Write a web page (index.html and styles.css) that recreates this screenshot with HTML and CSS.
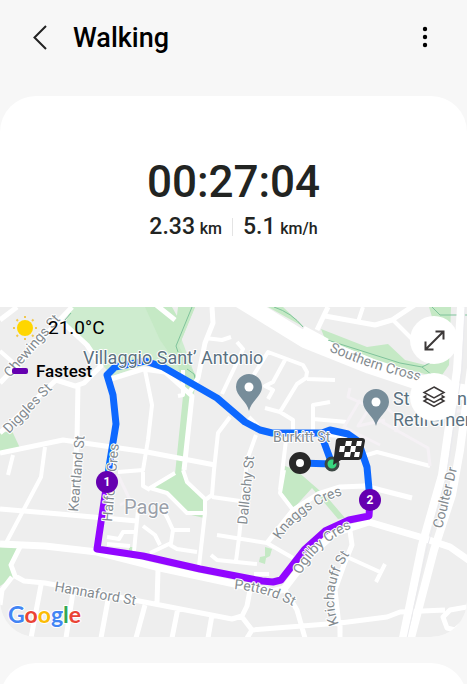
FILE: index.html
```html
<!DOCTYPE html>
<html lang="en">
<head>
  <meta charset="UTF-8" />
  <meta name="viewport" content="width=device-width, initial-scale=1.0"/>
  <title>Walking</title>
  <link rel="stylesheet" href="styles.css">
</head>
<body>
  <header class="topbar">
    <button class="icon-btn" aria-label="Back">
      <svg width="24" height="30" viewBox="0 0 24 30"><path d="M18 3L6.500 14.500L18 26"/></svg>
    </button>
    <h1>Walking</h1>
    <button class="icon-btn more" aria-label="More options">
      <svg width="24" height="30" viewBox="0 0 24 30"><circle cx="12" cy="6" r="2.200"/><circle cx="12" cy="14" r="2.200"/><circle cx="12" cy="22" r="2.200"/></svg>
    </button>
  </header>

  <main class="card">
    <section class="summary">
      <div class="time">00:27:04</div>
      <div class="stats">
        <span class="stat">2.33 <small>km</small></span>
        <span class="stat">5.1 <small>km/h</small></span>
      </div>
    </section>

    <section class="map">
      <svg class="map-canvas" viewBox="0 307 467 330">
        <defs>
          <path id="southern" d="M329 351Q370 370 425 382"/>
          <path id="petterd" d="M234 589Q270 592 300 610"/>
          <path id="ogilby" d="M301 575Q315 545 354 527"/>
          <path id="krichauff" d="M339 624Q324 588 354 548"/>
          <path id="knaggs" d="M280 540Q300 508 345 494"/>
        </defs>

        <!-- parks -->
        <g class="park">
          <path class="park-light" d="M71 307H158L180 335L196 378L163 365L150 363L113 376L103 366L86 344L66 322Z"/>
          <path d="M145 307H172L182 325L190 307H195L179 346L194 376L185 375L160 340Z"/>
          <path d="M178 307H195L178 348L197 377L193 398L183 470L187 483L205 500L204 518L187 514L167 494L151 488L175 474L183 396L174 340Z"/>
          <path d="M285 466L296 470L327 497L345 518L338 519L312 488L293 509L281 494Z"/>
          <path d="M0 433L12 431L20 448L0 452Z"/>
          <path d="M0 547L18 548L11 565L14 577L0 586Z"/>
          <path d="M321 329L367 347L388 344L405 360L425 365L445 360L429 307H451L449 365L440 378L380 362L325 339Z"/>
          <path d="M268 307H283L304 327Z"/>
          <path d="M265 547L272 549L270 556L266 558L265 564L259 562L260 557L265 556Z"/>
          <path d="M129 547h4v5h-4z"/>
        </g>
        <path class="trail" d="M192 307L176 346L178 352M187 369L194 374L196 382M274 307Q292 313 303 327M321 338L400 363L422 367L430 363M432 307L440 315H467M422 367L432 375M65 320L71 313"/>

        <!-- streets -->
        <path class="street thin" d="M0 351L25 373M13 455L8 475M45 447L41 477L6 543M145 370L152 405L148 440L143 470L118 472M143 472L143 486L150 490M205 338L222 340L231 337M237 342L243 349L240 356L222 394M243 392L268 352L303 365L307 372L306 378L297 384L280 412L265 408M285 360L273 382L265 386L273 390L268 399M280 412L293 420V434M230 417L218 433L214 470L212 495L205 500V513L199 566M183 370V395L178 396M256 435L247 460L239 538L236 561M249 417L258 426M286 440L280 490M212 497L240 501M183 470L187 482L205 499M205 513H187L167 493L150 488L175 473M217 535L267 543L293 558M211 555L217 560L257 564M254 574H269M284 470L280 493L293 510M163 510L167 517L173 530L171 543L150 553M173 530H190M170 545L177 549L197 552M143 526L155 535L160 545M107 537L119 539L123 532H134M107 544L130 546M138 510L134 551M307 379L335 380M313 430V405L330 402M313 419L347 422M363 307L358 322M393 320L413 340M307 433L340 436L360 446M360 457L377 452L430 466M347 557L380 572M385 564L376 582"/>
        <path class="street lane" d="M350 388L348 397L370 407L382 404M360 400L344 427L380 445M370 407L358 426L385 420M382 422L428 448L430 466M387 408L400 420L395 432M118 475L130 500L120 505M467 411H455"/>
        <path class="street" d="M0 320L17 307M72 307L0 383M60 320L87 345L101 366L84 383L75 386L56 380L0 433M78 384L77 440L72 512M0 453L63 440L147 452L215 465M111 379L143 369L165 372L192 396L184 470M212 307L213 323L205 343L198 378L190 392M0 509L60 514L137 521M12 577L2 590L0 605M41 585L31 638M73 592L66 638M108 600L101 638M145 605L136 638M158 570L157 603M178 608L172 638M212 615L208 638M20 547L11 565L15 576L24 581L45 583L160 605L232 619L242 616L247 606L250 590M242 617L252 630L247 638M252 630L340 623L387 617L400 612L445 610M285 590L297 610L305 638M340 620V638M267 543L293 510L318 494L340 487L365 486L412 498M349 524L352 545L345 562L335 590L339 626M150 300L175 320M328 307L317 330M325 316L375 325L392 320L416 304M467 607L450 610L443 617L447 628L455 630L467 620"/>
        <path class="street wide" d="M0 544L45 546L97 552L160 568L230 583L272 592L284 589L310 555L335 533L369 522L420 537L450 547L470 561"/>
        <path class="street avenue" d="M235 297L305 340L370 366L430 386L467 393M301 333L325 346"/>
        <path class="street drive" d="M461 307L457 370L447 440L442 475L422 545L403 638M472 360L460 450L452 495L434 550L411 638"/>
        <path class="median" d="M465 307L462 370L452 440L446 480L427 548L407 638"/>

        <!-- street names -->
        <g class="label">
          <text transform="translate(10 378) rotate(-49)">Chewings St</text>
          <text transform="translate(9 434) rotate(-46)">Diggles St</text>
          <text transform="translate(78 512) rotate(-85)">Keartland St</text>
          <text transform="translate(247 525) rotate(-84)">Dallachy St</text>
          <text transform="translate(442 529) rotate(-76)">Coulter Dr</text>
          <text transform="translate(54 591) rotate(10)">Hannaford St</text>
          <text><textPath href="#southern">Southern Cross</textPath></text>
          <text><textPath href="#krichauff">Krichauff St</textPath></text>
          <text><textPath href="#knaggs">Knaggs Cres</textPath></text>
          <text class="suburb" x="124" y="514">Page</text>
        </g>

        <!-- route -->
        <path class="route" d="M107 482L109 467L116 424L113 395L107 375L115 367L145 361L163 367L217 398L245 422L260 430L272 433L322 433L330 430L348 434L358 441L367 467L370 500M321 434L332 464L300 463"/>
        <path class="route fastest" d="M107 482L97 549L143 556L200 569L262 581L273 582L281 580L305 549L325 531L349 520L369 516L370 500"/>

        <g class="label">
          <text transform="translate(112 522) rotate(-85)">Halford Cres</text>
          <text><textPath href="#ogilby">Ogilby Cres</textPath></text>
          <text><textPath href="#petterd">Petterd St</textPath></text>
          <text x="273" y="442">Burkitt St</text>
          <g class="place">
            <text x="83" y="364">Villaggio Sant’ Antonio</text>
            <text x="393" y="405">St</text>
            <text x="457" y="405">nd</text>
            <text x="393" y="426">Retirement</text>
          </g>
        </g>

        <!-- pins -->
        <g class="pin">
          <path d="M249 411C247 401 236 396 236 387a13 13 0 0 1 26 0C262 396 251 401 249 411Z"/>
          <circle cx="249" cy="387" r="4.500"/>
          <path d="M376 426C374 416 363 411 363 402a13 13 0 0 1 26 0C389 411 378 416 376 426Z"/>
          <circle cx="376" cy="402" r="4.500"/>
        </g>
        <circle class="start" cx="300" cy="463" r="7.500"/>
        <circle class="finish" cx="332" cy="464" r="6"/>
        <g class="flag">
          <path d="M339 438H362Q365 438 365 441L362 457Q361 460 358 460H341L333 465L336 440Q337 438 339 438Z"/>
          <path class="checks" d="M346 441h6l-1 5h-6zM357 441h5l-1 5h-5zM340 446h5l-1 6h-5zM351 446h5l-1 6h-5zM345 452h6l-1 5h-6zM355 452h5l-1 5h-5z"/>
        </g>
        <g class="km">
          <circle cx="107" cy="482" r="11"/>
          <text x="107" y="486">1</text>
          <circle cx="370" cy="500" r="11"/>
          <text x="370" y="504">2</text>
        </g>

        <text class="google" x="8" y="623"><tspan class="blue">G</tspan><tspan class="red">o</tspan><tspan class="yellow">o</tspan><tspan class="blue">g</tspan><tspan class="green">l</tspan><tspan class="red">e</tspan></text>
      </svg>

      <div class="map-info">
        <div class="weather">
          <svg width="26" height="26" viewBox="0 0 26 26">
            <circle cx="13" cy="13" r="8"/>
            <path d="M13 1v2M13 23v2M1 13h2M23 13h2M4.500 4.500l1.500 1.500M20 20l1.500 1.500M4.500 21.500L6 20M20 6l1.500-1.500"/>
          </svg>
          <span>21.0°C</span>
        </div>
        <div class="legend">Fastest</div>
      </div>

      <div class="map-buttons">
        <button class="round-btn" aria-label="Expand map">
          <svg width="24" height="24" viewBox="0 0 24 24"><path d="M3.500 21.500L21.500 3.500M13.500 3.500h8v8M3.500 13.500v8h8"/></svg>
        </button>
        <button class="round-btn" aria-label="Map layers">
          <svg class="layers" width="24" height="24" viewBox="0 0 24 24"><path d="M12 2L22 7.500L12 13L2 7.500ZM4.500 10.500L2 12L12 17.500L22 12L19.500 10.500M4.500 14.500L2 16L12 21.500L22 16L19.500 14.500"/></svg>
        </button>
      </div>
    </section>
  </main>

  <section class="card next"></section>
</body>
</html>
```

FILE: styles.css
```css
* {
  box-sizing: border-box;
}

body {
  margin: 0;
  height: 100vh;
  overflow-y: auto;
  scrollbar-width: none;
  font-family: Roboto, sans-serif;
  background: #f7f7f7;
  color: #222422;
}

button {
  padding: 0;
  border: none;
  cursor: pointer;
}

.topbar {
  display: flex;
  align-items: center;
  height: 76px;
  margin-bottom: 20px;
  padding: 0 30px 0 28px;
}

.topbar h1 {
  flex: 1;
  margin: 0 0 0 21px;
  font-size: 27px;
  font-weight: 500;
  color: #000;
}

.icon-btn {
  display: flex;
  background: none;
}

.icon-btn svg {
  fill: none;
  stroke: #222;
  stroke-width: 2;
}

.more svg {
  fill: #000;
  stroke: none;
}

.card {
  background: #fff;
  border-radius: 36px;
  overflow: hidden;
}

.next {
  min-height: 120px;
  margin-top: 26px;
}

/* summary */
.summary {
  padding: 60px 0;
  text-align: center;
  font-weight: 500;
}

.time {
  font-size: 44px;
  line-height: 53px;
}

.stats {
  display: flex;
  justify-content: center;
  line-height: 36px;
}

.stat {
  font-size: 23px;
}

.stat small {
  font-size: 16px;
  margin-left: -1px;
}

.stat + .stat {
  position: relative;
  margin-left: 21px;
}

.stat + .stat::before {
  content: "";
  position: absolute;
  left: -11px;
  top: 9px;
  height: 18px;
  border-left: 1px solid #e4e4e4;
}

/* map */
.map {
  position: relative;
  background: #eee;
}

.map-canvas {
  display: block;
  width: 100%;
}

.park {
  fill: #c5e9c5;
}

.park-light {
  fill: #ceeccf;
}

.trail {
  fill: none;
  stroke: #7fc39b;
  stroke-width: 1;
}

.street {
  fill: none;
  stroke: #fff;
  stroke-width: 5;
  stroke-linejoin: round;
}

.thin {
  stroke-width: 4;
}

.lane {
  stroke: #f5f1f5;
  stroke-width: 3;
}

.wide {
  stroke-width: 7;
}

.avenue {
  stroke-width: 16;
}

.drive {
  stroke-width: 8;
}

.median {
  fill: none;
  stroke: #eaeaee;
  stroke-width: 1;
}

.label {
  font-size: 14px;
  fill: #848b90;
  stroke: #fff;
  stroke-width: 2px;
  stroke-linejoin: round;
  paint-order: stroke;
}

.suburb {
  font-size: 20px;
  fill: #9ba1aa;
}

.place {
  font-size: 18px;
  fill: #5a717f;
}

.route {
  fill: none;
  stroke: #0d68ff;
  stroke-width: 7;
  stroke-linejoin: round;
}

.fastest {
  stroke: #9206ff;
}

.pin {
  fill: #778d9a;
}

.pin circle {
  fill: #fff;
}

.start {
  fill: #fff;
  stroke: #292929;
  stroke-width: 7;
}

.finish {
  fill: #37d67e;
  stroke: #3c4844;
  stroke-width: 3;
}

.flag {
  fill: #292929;
}

.checks {
  fill: #fff;
}

.km {
  fill: #6500b0;
}

.km text {
  fill: #fff;
  font-size: 12px;
  font-weight: 700;
  text-anchor: middle;
}

.google {
  font-family: Lato, sans-serif;
  font-size: 23px;
  font-weight: 700;
  stroke: #fff;
  stroke-width: 2px;
  paint-order: stroke;
}

.blue {
  fill: #4285f4;
}

.red {
  fill: #ea4335;
}

.yellow {
  fill: #fbbc05;
}

.green {
  fill: #34a853;
}

/* on top of the map */
.map-info {
  position: absolute;
  top: 8px;
  left: 12px;
  color: #000;
}

.weather {
  display: flex;
  align-items: center;
  gap: 10px;
  font-size: 19px;
  line-height: 26px;
}

.weather svg {
  fill: #ffd600;
  stroke: #f0c850;
  stroke-width: 2;
}

.weather circle {
  stroke: none;
}

.legend {
  display: flex;
  align-items: center;
  gap: 8px;
  margin-top: 20px;
  font-size: 17px;
  font-weight: 500;
  line-height: 20px;
}

.legend::before {
  content: "";
  width: 16px;
  height: 6px;
  border-radius: 2px;
  background: #6500b0;
}

.map-buttons {
  position: absolute;
  top: 9px;
  right: 9px;
  display: flex;
  flex-direction: column;
  gap: 9px;
}

.round-btn {
  display: flex;
  align-items: center;
  justify-content: center;
  width: 48px;
  height: 48px;
  border-radius: 50%;
  background: #fff;
}

.round-btn svg {
  fill: none;
  stroke: #3c3838;
  stroke-width: 2;
}

.round-btn .layers {
  stroke-width: 1.5;
}
```
